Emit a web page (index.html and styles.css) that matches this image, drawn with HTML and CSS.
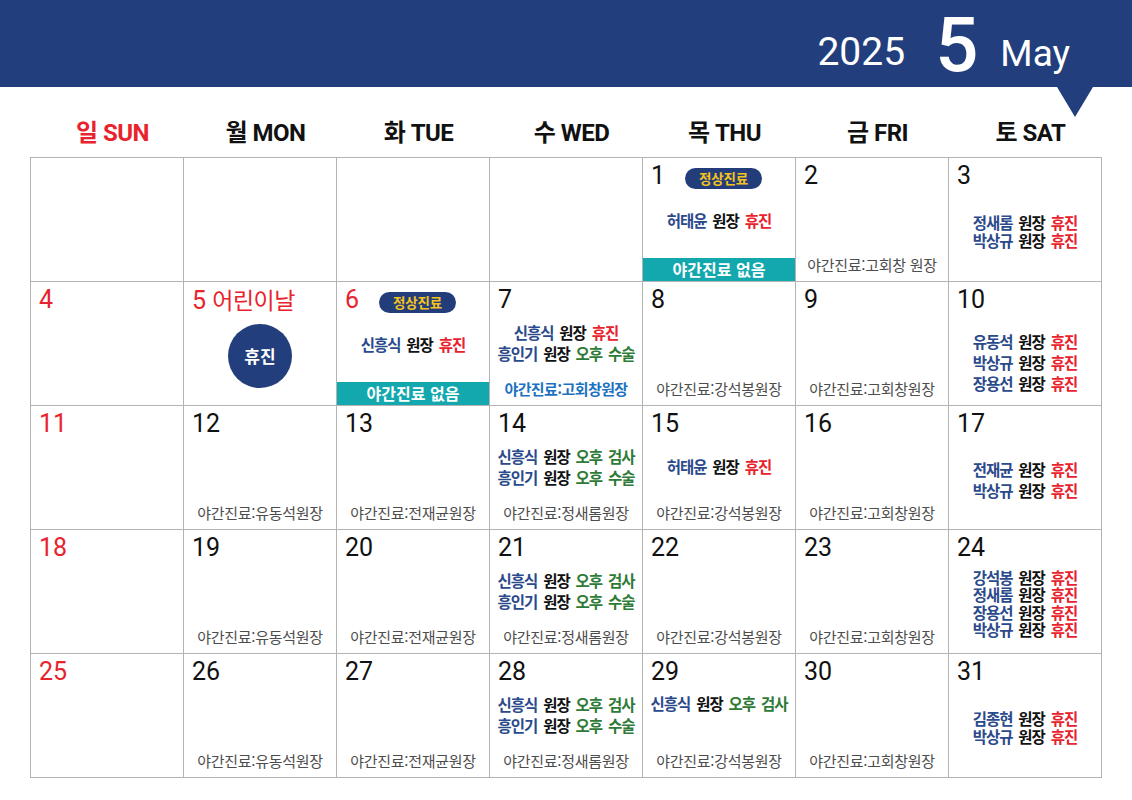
FILE: index.html
```html
<!DOCTYPE html>
<html lang="ko">
<head>
<meta charset="utf-8">
<title>2025 5 May</title>
<link rel="stylesheet" href="styles.css">
</head>
<body>
<header class="banner">
  <span class="year">2025</span>
  <span class="mon">5</span>
  <span class="en">May</span>
</header>

<div class="days">
  <div class="day sun">일 SUN</div>
  <div class="day">월 MON</div>
  <div class="day">화 TUE</div>
  <div class="day">수 WED</div>
  <div class="day">목 THU</div>
  <div class="day">금 FRI</div>
  <div class="day">토 SAT</div>
</div>

<div class="cal">
  <!-- row 1 -->
  <div class="cell"></div>
  <div class="cell"></div>
  <div class="cell"></div>
  <div class="cell"></div>
  <div class="cell">
    <div class="top"><span class="num">1</span><span class="badge">정상진료</span></div>
    <div class="body">
      <p class="line"><span class="nm">허태윤</span> 원장 <span class="off">휴진</span></p>
    </div>
    <div class="bar">야간진료 없음</div>
  </div>
  <div class="cell">
    <div class="top"><span class="num">2</span></div>
    <div class="body"></div>
    <div class="night">야간진료:고회창 원장</div>
  </div>
  <div class="cell">
    <div class="top"><span class="num">3</span></div>
    <div class="body tight">
      <p class="line"><span class="nm">정새롬</span> 원장 <span class="off">휴진</span></p>
      <p class="line"><span class="nm">박상규</span> 원장 <span class="off">휴진</span></p>
    </div>
  </div>

  <!-- row 2 -->
  <div class="cell">
    <div class="top"><span class="num red">4</span></div>
  </div>
  <div class="cell">
    <div class="top"><span class="num red">5 <span class="hol">어린이날</span></span></div>
    <div class="body">
      <div class="circle">휴진</div>
    </div>
  </div>
  <div class="cell">
    <div class="top"><span class="num red">6</span><span class="badge">정상진료</span></div>
    <div class="body">
      <p class="line"><span class="nm">신흥식</span> 원장 <span class="off">휴진</span></p>
    </div>
    <div class="bar">야간진료 없음</div>
  </div>
  <div class="cell">
    <div class="top"><span class="num">7</span></div>
    <div class="body">
      <p class="line"><span class="nm">신흥식</span> 원장 <span class="off">휴진</span></p>
      <p class="line"><span class="nm">흥인기</span> 원장 <span class="op">오후 수술</span></p>
    </div>
    <div class="night blue">야간진료:고회창원장</div>
  </div>
  <div class="cell">
    <div class="top"><span class="num">8</span></div>
    <div class="body"></div>
    <div class="night">야간진료:강석봉원장</div>
  </div>
  <div class="cell">
    <div class="top"><span class="num">9</span></div>
    <div class="body"></div>
    <div class="night">야간진료:고회창원장</div>
  </div>
  <div class="cell">
    <div class="top"><span class="num">10</span></div>
    <div class="body low">
      <p class="line"><span class="nm">유동석</span> 원장 <span class="off">휴진</span></p>
      <p class="line"><span class="nm">박상규</span> 원장 <span class="off">휴진</span></p>
      <p class="line"><span class="nm">장용선</span> 원장 <span class="off">휴진</span></p>
    </div>
  </div>

  <!-- row 3 -->
  <div class="cell">
    <div class="top"><span class="num red">11</span></div>
  </div>
  <div class="cell">
    <div class="top"><span class="num">12</span></div>
    <div class="body"></div>
    <div class="night">야간진료:유동석원장</div>
  </div>
  <div class="cell">
    <div class="top"><span class="num">13</span></div>
    <div class="body"></div>
    <div class="night">야간진료:전재균원장</div>
  </div>
  <div class="cell">
    <div class="top"><span class="num">14</span></div>
    <div class="body">
      <p class="line"><span class="nm">신흥식</span> 원장 <span class="op">오후 검사</span></p>
      <p class="line"><span class="nm">흥인기</span> 원장 <span class="op">오후 수술</span></p>
    </div>
    <div class="night">야간진료:정새롬원장</div>
  </div>
  <div class="cell">
    <div class="top"><span class="num">15</span></div>
    <div class="body">
      <p class="line"><span class="nm">허태윤</span> 원장 <span class="off">휴진</span></p>
    </div>
    <div class="night">야간진료:강석봉원장</div>
  </div>
  <div class="cell">
    <div class="top"><span class="num">16</span></div>
    <div class="body"></div>
    <div class="night">야간진료:고회창원장</div>
  </div>
  <div class="cell">
    <div class="top"><span class="num">17</span></div>
    <div class="body">
      <p class="line"><span class="nm">전재균</span> 원장 <span class="off">휴진</span></p>
      <p class="line"><span class="nm">박상규</span> 원장 <span class="off">휴진</span></p>
    </div>
  </div>

  <!-- row 4 -->
  <div class="cell">
    <div class="top"><span class="num red">18</span></div>
  </div>
  <div class="cell">
    <div class="top"><span class="num">19</span></div>
    <div class="body"></div>
    <div class="night">야간진료:유동석원장</div>
  </div>
  <div class="cell">
    <div class="top"><span class="num">20</span></div>
    <div class="body"></div>
    <div class="night">야간진료:전재균원장</div>
  </div>
  <div class="cell">
    <div class="top"><span class="num">21</span></div>
    <div class="body">
      <p class="line"><span class="nm">신흥식</span> 원장 <span class="op">오후 검사</span></p>
      <p class="line"><span class="nm">흥인기</span> 원장 <span class="op">오후 수술</span></p>
    </div>
    <div class="night">야간진료:정새롬원장</div>
  </div>
  <div class="cell">
    <div class="top"><span class="num">22</span></div>
    <div class="body"></div>
    <div class="night">야간진료:강석봉원장</div>
  </div>
  <div class="cell">
    <div class="top"><span class="num">23</span></div>
    <div class="body"></div>
    <div class="night">야간진료:고회창원장</div>
  </div>
  <div class="cell">
    <div class="top"><span class="num">24</span></div>
    <div class="body tight">
      <p class="line"><span class="nm">강석봉</span> 원장 <span class="off">휴진</span></p>
      <p class="line"><span class="nm">정새롬</span> 원장 <span class="off">휴진</span></p>
      <p class="line"><span class="nm">장용선</span> 원장 <span class="off">휴진</span></p>
      <p class="line"><span class="nm">박상규</span> 원장 <span class="off">휴진</span></p>
    </div>
  </div>

  <!-- row 5 -->
  <div class="cell">
    <div class="top"><span class="num red">25</span></div>
  </div>
  <div class="cell">
    <div class="top"><span class="num">26</span></div>
    <div class="body"></div>
    <div class="night">야간진료:유동석원장</div>
  </div>
  <div class="cell">
    <div class="top"><span class="num">27</span></div>
    <div class="body"></div>
    <div class="night">야간진료:전재균원장</div>
  </div>
  <div class="cell">
    <div class="top"><span class="num">28</span></div>
    <div class="body">
      <p class="line"><span class="nm">신흥식</span> 원장 <span class="op">오후 검사</span></p>
      <p class="line"><span class="nm">흥인기</span> 원장 <span class="op">오후 수술</span></p>
    </div>
    <div class="night">야간진료:정새롬원장</div>
  </div>
  <div class="cell">
    <div class="top"><span class="num">29</span></div>
    <div class="body start">
      <p class="line"><span class="nm">신흥식</span> 원장 <span class="op">오후 검사</span></p>
    </div>
    <div class="night">야간진료:강석봉원장</div>
  </div>
  <div class="cell">
    <div class="top"><span class="num">30</span></div>
    <div class="body"></div>
    <div class="night">야간진료:고회창원장</div>
  </div>
  <div class="cell">
    <div class="top"><span class="num">31</span></div>
    <div class="body tight">
      <p class="line"><span class="nm">김종현</span> 원장 <span class="off">휴진</span></p>
      <p class="line"><span class="nm">박상규</span> 원장 <span class="off">휴진</span></p>
    </div>
  </div>
</div>
</body>
</html>
```

FILE: styles.css
```css
* {
  box-sizing: border-box;
  margin: 0;
  padding: 0;
}

body {
  width: 1132px;
  height: 800px;
  overflow: hidden;
  background: #ffffff;
  font-family: Roboto, "Noto Sans CJK KR", sans-serif;
  color: #111111;
}

/* ---------- banner ---------- */
.banner {
  position: relative;
  height: 87px;
  background: #223e7c;
  color: #ffffff;
  display: flex;
  justify-content: flex-end;
  align-items: flex-end;
  padding-right: 62px;
  padding-bottom: 15px;
}

.banner::after {
  content: "";
  position: absolute;
  top: 100%;
  right: 39px;
  width: 0;
  height: 0;
  border-left: 18px solid transparent;
  border-right: 18px solid transparent;
  border-top: 30px solid #223e7c;
}

.year {
  font-size: 39px;
  line-height: 1;
  font-weight: 400;
}

.mon {
  font-size: 76px;
  line-height: 1;
  font-weight: 500;
  margin: 0 22px -11px 30px;
}

.en {
  font-size: 37px;
  line-height: 1;
  font-weight: 400;
}

/* ---------- weekday labels ---------- */
.days {
  display: grid;
  grid-template-columns: repeat(7, 153px);
  margin-left: 36px;
  height: 70px;
  align-items: end;
  padding-bottom: 10px;
}

.day {
  text-align: center;
  font-family: Roboto, "Noto Sans CJK KR", sans-serif;
  font-weight: 700;
  font-size: 24px;
  line-height: 28px;
  color: #111111;
  letter-spacing: -0.5px;
}

.day.sun {
  color: #e8232d;
}

/* ---------- calendar grid ---------- */
.cal {
  margin-left: 30px;
  width: 1072px;
  display: grid;
  grid-template-columns: repeat(7, 153px);
  grid-auto-rows: 124px;
  border-top: 1px solid #b3b3b3;
  border-left: 1px solid #b3b3b3;
}

.cell {
  border-right: 1px solid #b3b3b3;
  border-bottom: 1px solid #b3b3b3;
  display: flex;
  flex-direction: column;
  min-width: 0;
}

.top {
  height: 32px;
  flex: none;
  display: flex;
  align-items: center;
  padding: 3px 0 0 8px;
}

.num {
  font-family: Roboto, "Noto Sans CJK KR", sans-serif;
  font-size: 25px;
  line-height: 29px;
  font-weight: 400;
  color: #111111;
  white-space: nowrap;
}

.num.red {
  color: #e8232d;
}

.hol {
  font-family: "Noto Sans CJK KR", sans-serif;
  font-size: 23px;
  letter-spacing: -0.5px;
}

.badge {
  margin-left: 20px;
  margin-top: 5px;
  height: 21px;
  padding: 0 14px;
  border-radius: 11px;
  background: #233d7b;
  color: #f5c31c;
  font-family: "Noto Sans CJK KR", sans-serif;
  font-weight: 700;
  font-size: 13.5px;
  line-height: 21px;
  letter-spacing: -0.2px;
  white-space: nowrap;
}

.body {
  flex: 1;
  display: flex;
  flex-direction: column;
  justify-content: center;
  align-items: center;
  padding-bottom: 8px;
}

.body.low {
  padding-bottom: 0;
  padding-top: 6px;
}

.body.start {
  justify-content: flex-start;
  padding-top: 7px;
}

.line {
  font-family: "Noto Sans CJK KR", sans-serif;
  font-weight: 700;
  font-size: 15.5px;
  line-height: 21px;
  letter-spacing: -1px;
  word-spacing: 2.5px;
  color: #111111;
  white-space: nowrap;
  text-align: center;
}

.tight .line {
  line-height: 17.5px;
}

.nm {
  color: #2b4a8b;
}

.off {
  color: #e8232d;
}

.op {
  color: #2e7b37;
}

.night {
  flex: none;
  text-align: center;
  font-family: "Noto Sans CJK KR", sans-serif;
  font-weight: 400;
  font-size: 15px;
  line-height: 20px;
  letter-spacing: -0.3px;
  color: #4d4d4d;
  padding-bottom: 6px;
  white-space: nowrap;
}

.night.blue {
  color: #1c72c0;
  font-weight: 700;
  letter-spacing: -0.6px;
}

.bar {
  flex: none;
  height: 23px;
  background: #13a8ae;
  color: #ffffff;
  text-align: center;
  font-family: "Noto Sans CJK KR", sans-serif;
  font-weight: 700;
  font-size: 16px;
  line-height: 23px;
  letter-spacing: 0;
}

.circle {
  width: 64px;
  height: 64px;
  border-radius: 50%;
  background: #223e7c;
  color: #ffffff;
  display: flex;
  align-items: center;
  justify-content: center;
  font-family: "Noto Sans CJK KR", sans-serif;
  font-weight: 700;
  font-size: 17px;
}
```
